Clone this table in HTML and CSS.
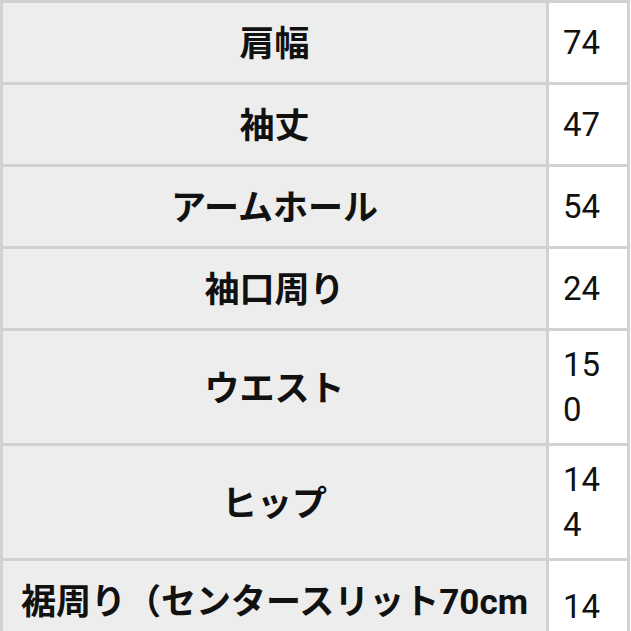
FILE: index.html
```html
<!DOCTYPE html>
<html lang="ja">
<head>
<meta charset="utf-8">
<link rel="stylesheet" href="styles.css">
</head>
<body>
<table class="size-table">
  <tbody>
    <tr><th class="label">肩幅</th><td class="value">74</td></tr>
    <tr><th class="label">袖丈</th><td class="value">47</td></tr>
    <tr><th class="label">アームホール</th><td class="value">54</td></tr>
    <tr><th class="label">袖口周り</th><td class="value">24</td></tr>
    <tr><th class="label">ウエスト</th><td class="value">150</td></tr>
    <tr><th class="label">ヒップ</th><td class="value">144</td></tr>
    <tr><th class="label">裾周り（センタースリット70cm）</th><td class="value">141</td></tr>
  </tbody>
</table>
</body>
</html>
```
FILE: styles.css
```css
html, body {
  margin: 0;
  padding: 0;
  background: #ffffff;
}
body {
  width: 631px;
  height: 631px;
  overflow: hidden;
  font-family: Roboto, "Noto Sans CJK JP", sans-serif;
  color: #111111;
}
.size-table {
  width: 630px;
  border-collapse: separate;
  border-spacing: 0;
  border-top: 3px solid #d2d2d2;
  border-left: 3px solid #d2d2d2;
  table-layout: fixed;
}
.label,
.value {
  border-right: 3px solid #d2d2d2;
  border-bottom: 3px solid #d2d2d2;
  padding: 11px 14px;
  vertical-align: middle;
}
.label {
  width: 515px;
  padding: 13px 14px 9px;
  background: #ededed;
  font-size: 35px;
  font-weight: 700;
  line-height: 57px;
  text-align: center;
  line-break: anywhere;
  word-break: break-all;
}
.value {
  background: #ffffff;
  font-size: 33px;
  font-weight: 400;
  line-height: 45px;
  text-align: left;
  word-break: break-all;
}
```
